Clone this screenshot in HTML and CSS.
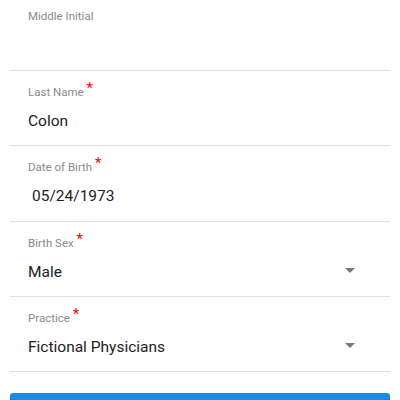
FILE: index.html
```html
<!DOCTYPE html>
<html lang="en">
<head>
    <meta charset="UTF-8">
    <meta name="viewport" content="width=device-width, initial-scale=1.0">
    <title>Patient Info</title>
    <link rel="stylesheet" href="styles.css">
</head>
<body>
    <div class="form">
        <div class="field first">
            <div class="label">Middle Initial</div>
            <div class="value"></div>
        </div>
        <div class="field">
            <div class="label">Last Name <span class="req">*</span></div>
            <div class="value">Colon</div>
        </div>
        <div class="field">
            <div class="label">Date of Birth <span class="req">*</span></div>
            <div class="value date">05/24/1973</div>
        </div>
        <div class="field">
            <div class="label">Birth Sex <span class="req">*</span></div>
            <div class="value select">Male <span class="caret"></span></div>
        </div>
        <div class="field">
            <div class="label">Practice <span class="req">*</span></div>
            <div class="value select">Fictional Physicians <span class="caret"></span></div>
        </div>
        <button class="btn" aria-label="Continue"></button>
    </div>
</body>
</html>
```

FILE: styles.css
```css
body {
    font-family: Roboto, 'Liberation Sans', sans-serif;
    background: #fff;
    margin: 0;
}
.form {
    padding: 0 10px;
}
.field {
    height: 75.25px;
    border-bottom: 1px solid #e0e0e0;
    padding: 13px 18px 0;
    box-sizing: border-box;
}
.field.first {
    height: 71px;
    padding-top: 9px;
}
.label {
    font-size: 11.5px;
    color: #8a8a8a;
    height: 14px;
    line-height: 14px;
}
.req {
    color: #f00;
    font-size: 15px;
    position: relative;
    top: -3px;
}
.value {
    margin-top: 13px;
    font-size: 15.5px;
    color: #222;
    height: 20px;
    line-height: 20px;
}
.value.date {
    padding-left: 4px;
}
.value.select {
    display: flex;
    justify-content: space-between;
    align-items: center;
    padding-right: 17px;
}
.caret {
    width: 0;
    height: 0;
    margin-top: -3px;
    border-left: 5px solid transparent;
    border-right: 5px solid transparent;
    border-top: 5px solid #777;
}
.btn {
    display: block;
    width: 100%;
    height: 40px;
    margin-top: 21px;
    background: #1e88e5;
    border: none;
    border-radius: 3px;
}
```
